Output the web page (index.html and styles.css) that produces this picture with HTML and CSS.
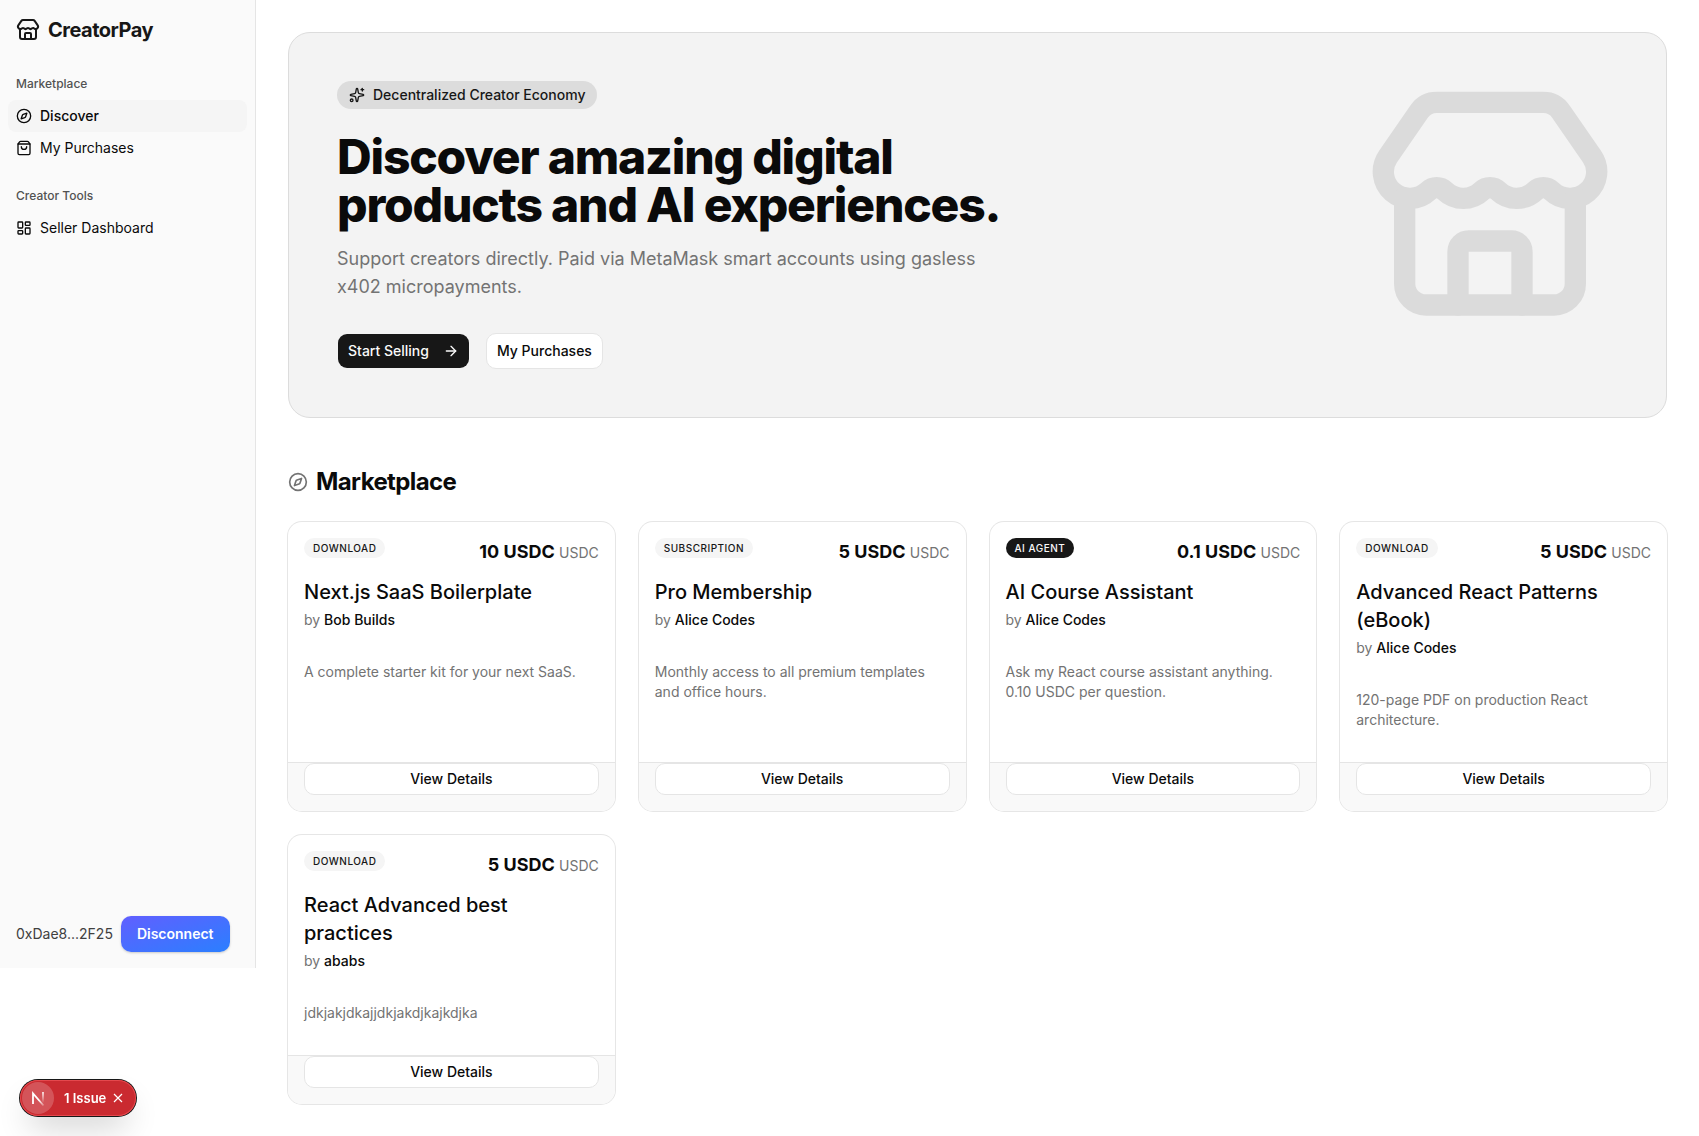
FILE: index.html
```
<!DOCTYPE html>
<html lang="en">
<head>
    <meta charset="utf-8">
    <meta name="viewport" content="width=device-width, initial-scale=1">
    <title>CreatorPay</title>
    <link rel="stylesheet" href="styles.css">
</head>
<body>
    <!-- icons shared by the page -->
    <svg class="sprite" aria-hidden="true">
        <symbol id="icon-store" viewBox="0 0 24 24">
            <path d="M15 21v-5a1 1 0 0 0-1-1h-4a1 1 0 0 0-1 1v5"/>
            <path d="M17.774 10.31a1.12 1.12 0 0 0-1.549 0 2.5 2.5 0 0 1-3.451 0 1.12 1.12 0 0 0-1.548 0 2.5 2.5 0 0 1-3.452 0 1.12 1.12 0 0 0-1.549 0 2.5 2.5 0 0 1-3.77-3.248l2.889-4.184A2 2 0 0 1 7 2h10a2 2 0 0 1 1.653.873l2.895 4.192a2.5 2.5 0 0 1-3.774 3.244"/>
            <path d="M4 10.95V19a2 2 0 0 0 2 2h12a2 2 0 0 0 2-2v-8.05"/>
        </symbol>
        <symbol id="icon-compass" viewBox="0 0 24 24">
            <circle cx="12" cy="12" r="10"/>
            <path d="m16.24 7.76-1.804 5.411a2 2 0 0 1-1.265 1.265L7.76 16.24l1.804-5.411a2 2 0 0 1 1.265-1.265z"/>
        </symbol>
        <symbol id="icon-bag" viewBox="0 0 24 24">
            <path d="M16 10a4 4 0 0 1-8 0"/>
            <path d="M3.103 6.034h17.794"/>
            <path d="M3.4 5.467a2 2 0 0 0-.4 1.2V20a2 2 0 0 0 2 2h14a2 2 0 0 0 2-2V6.667a2 2 0 0 0-.4-1.2l-2-2.667A2 2 0 0 0 17 2H7a2 2 0 0 0-1.6.8z"/>
        </symbol>
        <symbol id="icon-dashboard" viewBox="0 0 24 24">
            <rect width="7" height="9" x="3" y="3" rx="1"/>
            <rect width="7" height="5" x="14" y="3" rx="1"/>
            <rect width="7" height="9" x="14" y="12" rx="1"/>
            <rect width="7" height="5" x="3" y="16" rx="1"/>
        </symbol>
        <symbol id="icon-sparkles" viewBox="0 0 24 24">
            <path d="M11.017 2.814a1 1 0 0 1 1.966 0l1.051 5.558a2 2 0 0 0 1.594 1.594l5.558 1.051a1 1 0 0 1 0 1.966l-5.558 1.051a2 2 0 0 0-1.594 1.594l-1.051 5.558a1 1 0 0 1-1.966 0l-1.051-5.558a2 2 0 0 0-1.594-1.594l-5.558-1.051a1 1 0 0 1 0-1.966l5.558-1.051a2 2 0 0 0 1.594-1.594z"/>
            <path d="M20 2v4"/>
            <path d="M22 4h-4"/>
            <circle cx="4" cy="20" r="2"/>
        </symbol>
        <symbol id="icon-arrow" viewBox="0 0 24 24">
            <path d="M5 12h14"/>
            <path d="m12 5 7 7-7 7"/>
        </symbol>
    </svg>

    <div class="layout">
        <aside class="sidebar">
            <div class="brand">
                <svg class="icon icon-lg"><use href="#icon-store"/></svg>
                <span>CreatorPay</span>
            </div>

            <nav class="sidebar-nav">
                <div class="nav-group">
                    <div class="nav-label">Marketplace</div>
                    <a class="nav-item active" href="#"><svg class="icon"><use href="#icon-compass"/></svg>Discover</a>
                    <a class="nav-item" href="#"><svg class="icon"><use href="#icon-bag"/></svg>My Purchases</a>
                </div>
                <div class="nav-group">
                    <div class="nav-label">Creator Tools</div>
                    <a class="nav-item" href="#"><svg class="icon"><use href="#icon-dashboard"/></svg>Seller Dashboard</a>
                </div>
            </nav>

            <div class="wallet">
                <span>0xDae8...2F25</span>
                <button class="disconnect" type="button">Disconnect</button>
            </div>
        </aside>

        <main class="content">
            <section class="hero">
                <div class="hero-text">
                    <div class="hero-badge"><svg class="icon"><use href="#icon-sparkles"/></svg>Decentralized Creator Economy</div>
                    <h1>Discover amazing digital products and AI experiences.</h1>
                    <p>Support creators directly. Paid via MetaMask smart accounts using gasless x402 micropayments.</p>
                    <div class="hero-actions">
                        <a class="btn btn-primary" href="#">Start Selling <svg class="icon"><use href="#icon-arrow"/></svg></a>
                        <a class="btn btn-outline" href="#">My Purchases</a>
                    </div>
                </div>
                <svg class="icon hero-art"><use href="#icon-store"/></svg>
            </section>

            <section class="market">
                <h2><svg class="icon"><use href="#icon-compass"/></svg>Marketplace</h2>

                <div class="grid">
                    <article class="card">
                        <div class="card-body">
                            <div class="card-top">
                                <span class="tag">Download</span>
                                <div class="price">10 USDC <span>USDC</span></div>
                            </div>
                            <h3>Next.js SaaS Boilerplate</h3>
                            <div class="author">by <span>Bob Builds</span></div>
                            <p class="desc">A complete starter kit for your next SaaS.</p>
                        </div>
                        <div class="card-footer"><button class="btn btn-view" type="button">View Details</button></div>
                    </article>

                    <article class="card">
                        <div class="card-body">
                            <div class="card-top">
                                <span class="tag">Subscription</span>
                                <div class="price">5 USDC <span>USDC</span></div>
                            </div>
                            <h3>Pro Membership</h3>
                            <div class="author">by <span>Alice Codes</span></div>
                            <p class="desc">Monthly access to all premium templates and office hours.</p>
                        </div>
                        <div class="card-footer"><button class="btn btn-view" type="button">View Details</button></div>
                    </article>

                    <article class="card">
                        <div class="card-body">
                            <div class="card-top">
                                <span class="tag tag-dark">AI Agent</span>
                                <div class="price">0.1 USDC <span>USDC</span></div>
                            </div>
                            <h3>AI Course Assistant</h3>
                            <div class="author">by <span>Alice Codes</span></div>
                            <p class="desc">Ask my React course assistant anything. 0.10 USDC per question.</p>
                        </div>
                        <div class="card-footer"><button class="btn btn-view" type="button">View Details</button></div>
                    </article>

                    <article class="card">
                        <div class="card-body">
                            <div class="card-top">
                                <span class="tag">Download</span>
                                <div class="price">5 USDC <span>USDC</span></div>
                            </div>
                            <h3>Advanced React Patterns (eBook)</h3>
                            <div class="author">by <span>Alice Codes</span></div>
                            <p class="desc">120-page PDF on production React architecture.</p>
                        </div>
                        <div class="card-footer"><button class="btn btn-view" type="button">View Details</button></div>
                    </article>

                    <article class="card">
                        <div class="card-body">
                            <div class="card-top">
                                <span class="tag">Download</span>
                                <div class="price">5 USDC <span>USDC</span></div>
                            </div>
                            <h3>React Advanced best practices</h3>
                            <div class="author">by <span>ababs</span></div>
                            <p class="desc">jdkjakjdkajjdkjakdjkajkdjka</p>
                        </div>
                        <div class="card-footer"><button class="btn btn-view" type="button">View Details</button></div>
                    </article>
                </div>
            </section>
        </main>
    </div>

    <!-- dev overlay -->
    <div class="issues">
        <button class="issues-logo" type="button" aria-label="Open dev tools">
            <svg width="32" height="32" viewBox="0 0 32 32" fill="none">
                <defs>
                    <linearGradient id="fade-diagonal" x1="17" y1="18" x2="22" y2="24" gradientUnits="userSpaceOnUse">
                        <stop offset="0" stop-color="#fff"/>
                        <stop offset="1" stop-color="#fff" stop-opacity="0.2"/>
                    </linearGradient>
                    <linearGradient id="fade-stem" x1="21" y1="10" x2="21" y2="21" gradientUnits="userSpaceOnUse">
                        <stop offset="0" stop-color="#fff"/>
                        <stop offset="1" stop-color="#fff" stop-opacity="0"/>
                    </linearGradient>
                </defs>
                <path d="M11 22V11.5L21.5 23.5" stroke="url(#fade-diagonal)" stroke-width="1.8"/>
                <path d="M21 10v11" stroke="url(#fade-stem)" stroke-width="1.6"/>
            </svg>
        </button>
        <button class="issues-open" type="button">1 Issue</button>
        <button class="issues-close" type="button" aria-label="Dismiss">
            <svg width="12" height="12" viewBox="0 0 12 12"><path d="M2 2l8 8M10 2l-8 8"/></svg>
        </button>
    </div>
</body>
</html>
```

FILE: styles.css
```
:root {
    --background: #ffffff;
    --foreground: #0a0a0a;
    --primary: #171717;
    --muted: #f5f5f5;
    --muted-text: #737373;
    --border: #e5e5e5;
    --sidebar: #fafafa;
}

* {
    box-sizing: border-box;
}

body {
    margin: 0;
    background-color: var(--background);
    color: var(--foreground);
    font-family: Inter, 'Liberation Sans', sans-serif;
    font-size: 14px;
    line-height: 20px;
}

h1, h2, h3, p {
    margin: 0;
}

a {
    color: inherit;
    text-decoration: none;
}

button {
    font: inherit;
    color: inherit;
    cursor: pointer;
}

.sprite {
    display: none;
}

.icon {
    width: 16px;
    height: 16px;
    flex-shrink: 0;
    fill: none;
    stroke: currentColor;
    stroke-width: 2;
    stroke-linecap: round;
    stroke-linejoin: round;
}

.icon-lg {
    width: 24px;
    height: 24px;
}

.layout {
    display: flex;
    align-items: flex-start;
}

/* Sidebar */
.sidebar {
    display: flex;
    flex-direction: column;
    flex-shrink: 0;
    width: 256px;
    height: calc(100vh - 168px);
    background-color: var(--sidebar);
    border-right: 1px solid var(--border);
}

.brand {
    display: flex;
    align-items: center;
    gap: 8px;
    padding: 16px;
    font-size: 20px;
    line-height: 28px;
    font-weight: 700;
    letter-spacing: -0.025em;
    color: var(--primary);
}

.sidebar-nav {
    flex: 1;
}

.nav-group {
    padding: 8px;
}

.nav-label {
    padding: 0 8px;
    font-size: 12px;
    line-height: 32px;
    font-weight: 500;
    color: #525252;
}

.nav-item {
    display: flex;
    align-items: center;
    gap: 8px;
    height: 32px;
    padding: 0 8px;
    border-radius: 8px;
}

.nav-item.active {
    background-color: var(--muted);
    font-weight: 500;
}

.wallet {
    display: flex;
    align-items: center;
    gap: 8px;
    padding: 16px;
    color: #404040;
}

.disconnect {
    height: 36px;
    padding: 0 16px;
    border: none;
    border-radius: 10px;
    background: linear-gradient(to bottom right, #615fff, #2b7fff);
    color: #ffffff;
    font-weight: 600;
    box-shadow: 0 1px 3px rgba(0, 0, 0, 0.1), 0 1px 2px rgba(0, 0, 0, 0.1);
}

/* Main column */
.content {
    display: flex;
    flex-direction: column;
    flex: 1;
    gap: 48px;
    min-width: 0;
    padding: 32px;
}

.hero {
    display: flex;
    justify-content: space-between;
    padding: 48px;
    border: 1px solid #dcdcdc;
    border-radius: 22px;
    background-color: #f3f3f3;
}

.hero-text {
    max-width: 672px;
}

.hero-badge {
    display: flex;
    align-items: center;
    gap: 8px;
    width: fit-content;
    padding: 4px 12px;
    border-radius: 14px;
    background-color: #dcdcdc;
    color: var(--primary);
    font-weight: 500;
}

.hero h1 {
    margin-top: 24px;
    font-size: 48px;
    line-height: 48px;
    font-weight: 800;
    letter-spacing: -0.025em;
}

.hero p {
    margin-top: 16px;
    font-size: 18px;
    line-height: 28px;
    color: var(--muted-text);
}

.hero-actions {
    display: flex;
    gap: 16px;
    margin-top: 32px;
}

.hero-art {
    width: 256px;
    height: 256px;
    color: #dbdbdb;
}

.btn {
    display: inline-flex;
    align-items: center;
    justify-content: center;
    height: 36px;
    padding: 0 10px;
    border: 1px solid var(--border);
    border-radius: 10px;
    background-color: var(--background);
    font-weight: 500;
}

.btn-primary {
    gap: 14px;
    border-color: transparent;
    background-color: var(--primary);
    background-clip: padding-box;
    color: #fafafa;
}

.market h2 {
    display: flex;
    align-items: center;
    gap: 8px;
    margin-bottom: 24px;
    font-size: 24px;
    line-height: 32px;
    font-weight: 700;
    letter-spacing: -0.025em;
}

.market h2 .icon {
    width: 20px;
    height: 20px;
    color: var(--muted-text);
}

.grid {
    display: grid;
    grid-template-columns: repeat(4, 1fr);
    gap: 24px;
}

.card {
    display: flex;
    flex-direction: column;
    overflow: hidden;
    border-radius: 14px;
    background-color: var(--background);
    box-shadow: 0 0 0 1px #e6e6e6;
}

.card-body {
    flex: 1;
    padding: 16px 16px 32px;
}

.card-top {
    display: flex;
    align-items: flex-start;
    justify-content: space-between;
}

.tag {
    padding: 0 8px;
    border: 1px solid transparent;
    border-radius: 10px;
    background-color: var(--muted);
    color: var(--primary);
    font-size: 10px;
    line-height: 18px;
    font-weight: 500;
    letter-spacing: 0.05em;
    text-transform: uppercase;
}

.tag-dark {
    background-color: var(--primary);
    color: #fafafa;
}

.price {
    font-size: 18px;
    line-height: 28px;
    font-weight: 700;
}

.price span {
    font-size: 14px;
    line-height: 20px;
    font-weight: 400;
    color: var(--muted-text);
}

.card h3 {
    margin-top: 12px;
    font-size: 20px;
    line-height: 28px;
    font-weight: 500;
}

.author {
    margin-top: 4px;
    color: var(--muted-text);
}

.author span {
    color: var(--foreground);
    font-weight: 500;
}

.desc {
    margin-top: 32px;
    color: var(--muted-text);
}

.card-footer {
    display: flex;
    padding: 0 16px 16px;
    border-top: 1px solid var(--border);
    background-color: #f9f9f9;
}

.btn-view {
    width: 100%;
    height: 32px;
}

/* Dev overlay pill */
.issues {
    position: fixed;
    left: 20px;
    bottom: 20px;
    display: flex;
    align-items: center;
    height: 36px;
    padding: 2px;
    border-radius: 18px;
    background-color: #ca2a30;
    color: #ffffff;
    font-size: 13px;
    box-shadow: 0 0 0 1px #171717, inset 0 0 0 1px #e5484d, 0 16px 32px -8px rgba(0, 0, 0, 0.24);
}

.issues button {
    display: flex;
    align-items: center;
    justify-content: center;
    padding: 0;
    border: none;
    background: none;
}

.issues .issues-logo {
    width: 32px;
    height: 32px;
    border-radius: 50%;
    background-color: rgba(255, 255, 255, 0.2);
}

.issues .issues-open {
    margin-left: 10px;
    font-weight: 600;
}

.issues .issues-close {
    width: 24px;
    height: 24px;
    margin-right: 4px;
}

.issues-close path {
    fill: none;
    stroke: #ffffff;
    stroke-width: 1.2;
}
```
